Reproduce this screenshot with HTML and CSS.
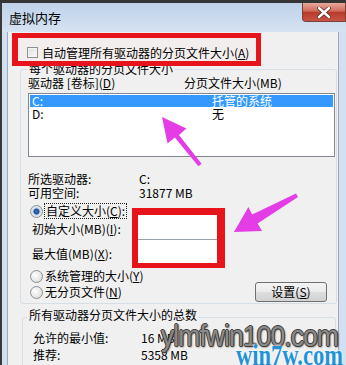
FILE: index.html
```html
<!DOCTYPE html>
<html>
  <head>
    <meta charset="utf-8">
    <link rel="stylesheet" href="styles.css">
  </head>
  <body>
    <div class="screen">
      <div class="window">
        <div class="titlebar">
          <span class="title">虚拟内存</span>
          <div class="close">
            <svg width="14" height="11" viewBox="0 0 14 11">
              <path d="M2 1 L12 10 M12 1 L2 10" stroke="#5a2a24" stroke-width="4" stroke-linecap="round"/>
              <path d="M2 1 L12 10 M12 1 L2 10" stroke="#fff" stroke-width="2.4" stroke-linecap="round"/>
            </svg>
          </div>
        </div>

        <div class="panel">
          <div class="mark mark-auto">
            <span class="checkbox"></span>
            <span class="auto-text">自动管理所有驱动器的分页文件大小(<u>A</u>)</span>
          </div>

          <div class="group group-drives">
            <div class="group-title">每个驱动器的分页文件大小</div>
            <div class="head">
              <span class="col-drive">驱动器 [卷标](<u>D</u>)</span>
              <span>分页文件大小(MB)</span>
            </div>
            <div class="listbox">
              <div class="list-row selected"><span class="list-drive">C:</span><span>托管的系统</span></div>
              <div class="list-row"><span class="list-drive">D:</span><span>无</span></div>
            </div>

            <div class="info first"><span class="info-label">所选驱动器:</span><span>C:</span></div>
            <div class="info"><span class="info-label">可用空间:</span><span>31877 MB</span></div>

            <div class="custom">
              <div class="custom-labels">
                <div class="radio-row">
                  <span class="radio checked"></span>
                  <span class="focus">自定义大小(<u>C</u>):</span>
                </div>
                <div class="size-label first">初始大小(MB)(<u>I</u>):</div>
                <div class="size-label second">最大值(MB)(<u>X</u>):</div>
              </div>
              <div class="mark mark-inputs">
                <input class="size-input top" type="text">
                <input class="size-input bottom" type="text">
              </div>
            </div>

            <div class="radio-row">
              <span class="radio"></span>
              <span class="radio-text">系统管理的大小(<u>Y</u>)</span>
            </div>
            <div class="last-row">
              <span class="radio"></span>
              <span class="radio-text">无分页文件(<u>N</u>)</span>
              <button class="set-button">设置(<u>S</u>)</button>
            </div>
          </div>

          <div class="group group-total">
            <div class="group-title">所有驱动器分页文件大小的总数</div>
            <div class="total first"><span class="total-label">允许的最小值:</span><span>16 MB</span></div>
            <div class="total"><span class="total-label">推荐:</span><span>5358 MB</span></div>
          </div>
        </div>
      </div>

      <svg class="arrows" width="346" height="365" viewBox="0 0 346 365">
        <polygon points="162,117 186.4,128.4 179,135 201.6,163.8 198.4,166.2 174.8,137.5 167.5,143.4" />
        <polygon points="234,232 262,231 257.6,223.4 298,197 296,193.5 252.2,214.4 248.4,207" />
      </svg>

      <div class="watermark">ylmfwin100.com</div>
      <div class="watermark-small">win7w.com</div>
    </div>
  </body>
</html>
```

FILE: styles.css
```css
body {
  margin: 0;
  font-family: "Noto Sans CJK SC", sans-serif;
  font-size: 12px;
  color: #000;
}

.screen {
  position: relative;
  width: 346px;
  height: 365px;
  padding-top: 3px;
  box-sizing: border-box;
  background: #353535;
  overflow: hidden;
}

.window {
  height: 362px;
  border-left: 2px solid #3a3a3a;
  background: #d3e0ef;
}

.titlebar {
  display: flex;
  height: 29px;
  background: linear-gradient(#bed2e9, #d6e3f2);
}
.title {
  padding-left: 7px;
  font-size: 13px;
  line-height: 29px;
}
.close {
  display: flex;
  align-items: center;
  justify-content: center;
  width: 44px;
  height: 19px;
  margin-left: auto;
  box-sizing: border-box;
  border: 1px solid #7a4038;
  border-top: none;
  border-radius: 0 0 0 4px;
  background: linear-gradient(#e8a99c, #d06a5a 45%, #b83b2b 52%, #c75444 100%);
}

.panel {
  width: 332px;
  height: 333px;
  margin-left: 5px;
  box-sizing: border-box;
  border-left: 1px solid #9aabc1;
  border-right: 1px solid #9aabc1;
  background: #f0f0f0;
  overflow: hidden;
}

.mark {
  position: relative;
  z-index: 1;
  box-sizing: border-box;
  border: solid #e8141c;
}
.mark-auto {
  display: flex;
  align-items: center;
  width: 249px;
  height: 33px;
  margin: 1px 0 0 4px;
  padding: 6px 0 0 9px;
  border-width: 5px 5px 5px 6px;
  background: #f3eeee;
}
.checkbox {
  width: 11px;
  height: 11px;
  box-sizing: border-box;
  border: 1px solid #8f8f8f;
  background: linear-gradient(135deg, #dcdcdc, #fbfbfb);
  box-shadow: inset 0 0 0 1px #f4f4f4;
}
.auto-text {
  margin-left: 4px;
  line-height: 14px;
}

.group {
  box-sizing: border-box;
  border: 1px solid #d5dfe5;
  border-radius: 3px;
}
.group-title {
  width: fit-content;
  padding: 0 2px;
  background: #f0f0f0;
  line-height: 14px;
  white-space: nowrap;
}

.group-drives {
  width: 317px;
  height: 235px;
  margin: 3px 0 0 12px;
  padding-left: 7px;
}
.group-drives .group-title {
  margin: -8px 0 0 -1px;
}

.head {
  display: flex;
  line-height: 14px;
}
.col-drive {
  width: 156px;
}

.listbox {
  width: 307px;
  height: 64px;
  margin-top: 3px;
  padding: 1px;
  box-sizing: border-box;
  border: 1px solid #828790;
  background: #fff;
}
.list-row {
  display: flex;
  height: 12px;
  padding-left: 2px;
  line-height: 12px;
}
.list-row + .list-row {
  margin-top: 1px;
}
.list-row.selected {
  background: #3399ff;
  color: #fff;
}
.list-drive {
  width: 180px;
}

.info {
  display: flex;
  line-height: 14px;
}
.info.first {
  margin-top: 15px;
}
.info-label {
  width: 111px;
}

.custom {
  display: flex;
  margin-top: 3px;
}
.custom-labels {
  width: 104px;
}
.radio-row,
.last-row {
  display: flex;
  align-items: center;
  height: 16px;
}
.radio {
  width: 13px;
  height: 13px;
  margin-left: 2px;
  box-sizing: border-box;
  border: 1px solid #8e8f8f;
  border-radius: 50%;
  background: radial-gradient(circle at 40% 40%, #ffffff, #d4d4d4);
}
.radio.checked {
  background: radial-gradient(circle, #3a73c4 0, #1d4f94 2.5px, #c9d9ea 3.5px, #e8eef5 6px);
}
.focus {
  margin-left: 1px;
  padding: 0 1px;
  line-height: 14px;
  border: 1px dotted #222;
  white-space: nowrap;
}
.radio-text {
  margin-left: 2px;
  line-height: 16px;
  white-space: nowrap;
}
.size-label {
  padding-left: 4px;
  line-height: 16px;
  white-space: nowrap;
}
.size-label.first {
  margin-top: 2px;
}
.size-label.second {
  margin-top: 9px;
}

.mark-inputs {
  width: 93px;
  height: 60px;
  margin-top: 5px;
  border-width: 7px 8px 5px 6px;
  background: #fff;
}
.size-input {
  display: block;
  width: 79px;
  height: 24px;
  margin: 0;
  padding: 0;
  box-sizing: border-box;
  border: none;
  background: #fff;
}
.size-input.bottom {
  border-top: 1px solid #98a3ab;
}

.last-row {
  height: 16px;
}
.set-button {
  width: 72px;
  height: 20px;
  margin: 0 9px 0 auto;
  padding: 0;
  box-sizing: border-box;
  border: 1px solid #707070;
  border-radius: 3px;
  background: linear-gradient(#f4f4f4, #ebebeb 48%, #dddddd 52%, #d2d2d2);
  font-family: "Noto Sans CJK SC", sans-serif;
  font-size: 12px;
  line-height: 16px;
  color: #000;
}

.group-total {
  width: 314px;
  height: 60px;
  margin: 13px 0 0 14px;
  padding-left: 10px;
}
.group-total .group-title {
  margin: -10px 0 0 -6px;
}
.total {
  display: flex;
  line-height: 16px;
}
.total.first {
  margin-top: 8px;
}
.total + .total {
  margin-top: 1px;
}
.total-label {
  width: 108px;
}

.arrows {
  position: absolute;
  top: 0;
  left: 0;
  fill: #e43de6;
  pointer-events: none;
}

.watermark {
  position: absolute;
  left: 161px;
  top: 321px;
  font-family: "Liberation Sans", sans-serif;
  font-size: 30px;
  line-height: 30px;
  letter-spacing: -1px;
  color: #8a8a8a;
  transform: scaleX(0.88);
  transform-origin: left top;
  text-shadow: 1px 0 #3d3d3d, -1px 0 #3d3d3d, 0 1px #3d3d3d, 0 -1px #3d3d3d, 1px 1px 2px #222;
  white-space: nowrap;
}
.watermark-small {
  position: absolute;
  left: 236px;
  top: 340px;
  font-family: "Liberation Serif", serif;
  font-weight: bold;
  font-size: 30px;
  line-height: 30px;
  color: #1f93d6;
  transform: scaleX(0.75);
  transform-origin: left top;
  text-shadow: 0 0 2px #fff, 0 0 2px #fff;
  white-space: nowrap;
}
```
